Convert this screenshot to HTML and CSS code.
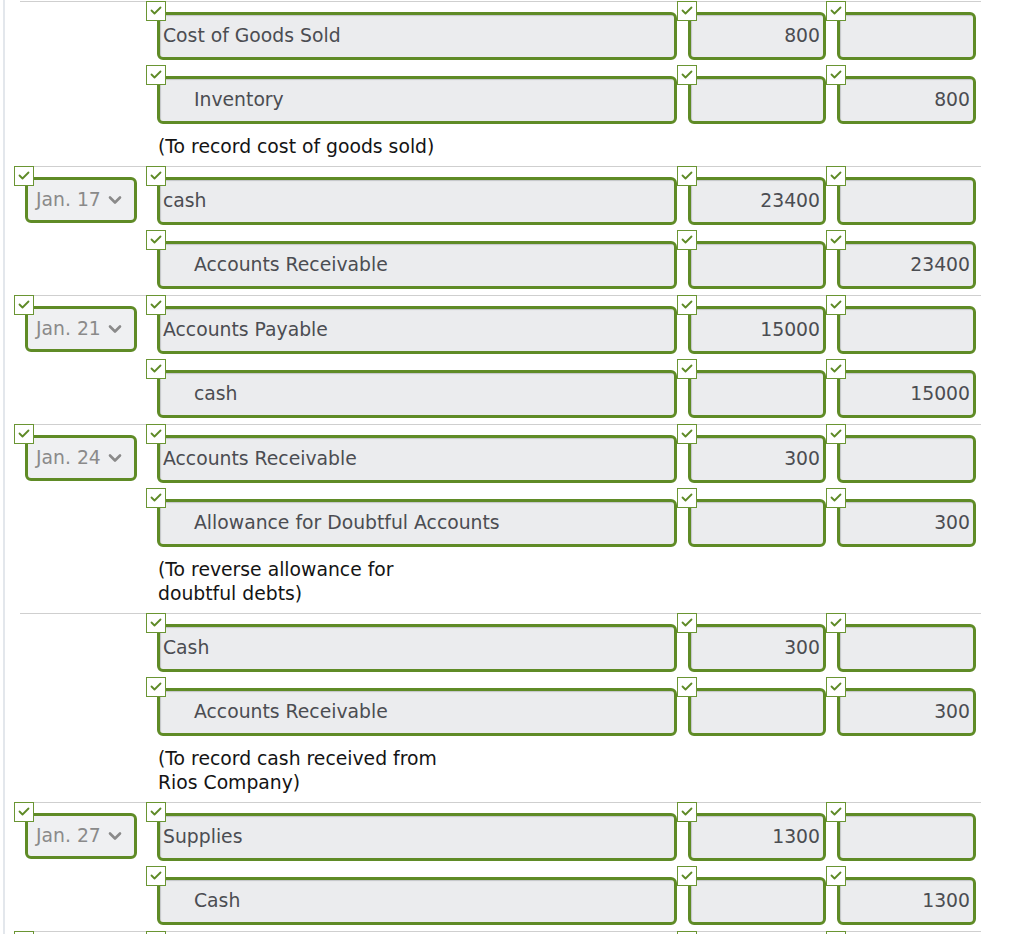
FILE: index.html
```html
<!DOCTYPE html>
<html>
<head>
<meta charset="utf-8">
<link rel="stylesheet" href="styles.css">
</head>
<body>
<div class="page">

  <div class="entry">
    <div class="row">
      <div class="cell date"></div>
      <div class="cell acct"><span class="cb"><svg viewBox="0 0 18 18"><path d="M4.5 8.5 L7.5 11.5 L13.5 5.5"/></svg></span><div class="field">Cost of Goods Sold</div></div>
      <div class="cell amt"><span class="cb"><svg viewBox="0 0 18 18"><path d="M4.5 8.5 L7.5 11.5 L13.5 5.5"/></svg></span><div class="field num">800</div></div>
      <div class="cell amt cr"><span class="cb"><svg viewBox="0 0 18 18"><path d="M4.5 8.5 L7.5 11.5 L13.5 5.5"/></svg></span><div class="field num"></div></div>
    </div>
    <div class="row">
      <div class="cell date"></div>
      <div class="cell acct"><span class="cb"><svg viewBox="0 0 18 18"><path d="M4.5 8.5 L7.5 11.5 L13.5 5.5"/></svg></span><div class="field credit">Inventory</div></div>
      <div class="cell amt"><span class="cb"><svg viewBox="0 0 18 18"><path d="M4.5 8.5 L7.5 11.5 L13.5 5.5"/></svg></span><div class="field num"></div></div>
      <div class="cell amt cr"><span class="cb"><svg viewBox="0 0 18 18"><path d="M4.5 8.5 L7.5 11.5 L13.5 5.5"/></svg></span><div class="field num">800</div></div>
    </div>
    <div class="note">(To record cost of goods sold)</div>
  </div>

  <div class="entry">
    <div class="row">
      <div class="cell date"><span class="cb"><svg viewBox="0 0 18 18"><path d="M4.5 8.5 L7.5 11.5 L13.5 5.5"/></svg></span><div class="select">Jan. 17<svg class="chev" viewBox="0 0 14 10"><path d="M2 2.5 L7 7.5 L12 2.5"/></svg></div></div>
      <div class="cell acct"><span class="cb"><svg viewBox="0 0 18 18"><path d="M4.5 8.5 L7.5 11.5 L13.5 5.5"/></svg></span><div class="field">cash</div></div>
      <div class="cell amt"><span class="cb"><svg viewBox="0 0 18 18"><path d="M4.5 8.5 L7.5 11.5 L13.5 5.5"/></svg></span><div class="field num">23400</div></div>
      <div class="cell amt cr"><span class="cb"><svg viewBox="0 0 18 18"><path d="M4.5 8.5 L7.5 11.5 L13.5 5.5"/></svg></span><div class="field num"></div></div>
    </div>
    <div class="row">
      <div class="cell date"></div>
      <div class="cell acct"><span class="cb"><svg viewBox="0 0 18 18"><path d="M4.5 8.5 L7.5 11.5 L13.5 5.5"/></svg></span><div class="field credit">Accounts Receivable</div></div>
      <div class="cell amt"><span class="cb"><svg viewBox="0 0 18 18"><path d="M4.5 8.5 L7.5 11.5 L13.5 5.5"/></svg></span><div class="field num"></div></div>
      <div class="cell amt cr"><span class="cb"><svg viewBox="0 0 18 18"><path d="M4.5 8.5 L7.5 11.5 L13.5 5.5"/></svg></span><div class="field num">23400</div></div>
    </div>
  </div>

  <div class="entry">
    <div class="row">
      <div class="cell date"><span class="cb"><svg viewBox="0 0 18 18"><path d="M4.5 8.5 L7.5 11.5 L13.5 5.5"/></svg></span><div class="select">Jan. 21<svg class="chev" viewBox="0 0 14 10"><path d="M2 2.5 L7 7.5 L12 2.5"/></svg></div></div>
      <div class="cell acct"><span class="cb"><svg viewBox="0 0 18 18"><path d="M4.5 8.5 L7.5 11.5 L13.5 5.5"/></svg></span><div class="field">Accounts Payable</div></div>
      <div class="cell amt"><span class="cb"><svg viewBox="0 0 18 18"><path d="M4.5 8.5 L7.5 11.5 L13.5 5.5"/></svg></span><div class="field num">15000</div></div>
      <div class="cell amt cr"><span class="cb"><svg viewBox="0 0 18 18"><path d="M4.5 8.5 L7.5 11.5 L13.5 5.5"/></svg></span><div class="field num"></div></div>
    </div>
    <div class="row">
      <div class="cell date"></div>
      <div class="cell acct"><span class="cb"><svg viewBox="0 0 18 18"><path d="M4.5 8.5 L7.5 11.5 L13.5 5.5"/></svg></span><div class="field credit">cash</div></div>
      <div class="cell amt"><span class="cb"><svg viewBox="0 0 18 18"><path d="M4.5 8.5 L7.5 11.5 L13.5 5.5"/></svg></span><div class="field num"></div></div>
      <div class="cell amt cr"><span class="cb"><svg viewBox="0 0 18 18"><path d="M4.5 8.5 L7.5 11.5 L13.5 5.5"/></svg></span><div class="field num">15000</div></div>
    </div>
  </div>

  <div class="entry">
    <div class="row">
      <div class="cell date"><span class="cb"><svg viewBox="0 0 18 18"><path d="M4.5 8.5 L7.5 11.5 L13.5 5.5"/></svg></span><div class="select">Jan. 24<svg class="chev" viewBox="0 0 14 10"><path d="M2 2.5 L7 7.5 L12 2.5"/></svg></div></div>
      <div class="cell acct"><span class="cb"><svg viewBox="0 0 18 18"><path d="M4.5 8.5 L7.5 11.5 L13.5 5.5"/></svg></span><div class="field">Accounts Receivable</div></div>
      <div class="cell amt"><span class="cb"><svg viewBox="0 0 18 18"><path d="M4.5 8.5 L7.5 11.5 L13.5 5.5"/></svg></span><div class="field num">300</div></div>
      <div class="cell amt cr"><span class="cb"><svg viewBox="0 0 18 18"><path d="M4.5 8.5 L7.5 11.5 L13.5 5.5"/></svg></span><div class="field num"></div></div>
    </div>
    <div class="row">
      <div class="cell date"></div>
      <div class="cell acct"><span class="cb"><svg viewBox="0 0 18 18"><path d="M4.5 8.5 L7.5 11.5 L13.5 5.5"/></svg></span><div class="field credit">Allowance for Doubtful Accounts</div></div>
      <div class="cell amt"><span class="cb"><svg viewBox="0 0 18 18"><path d="M4.5 8.5 L7.5 11.5 L13.5 5.5"/></svg></span><div class="field num"></div></div>
      <div class="cell amt cr"><span class="cb"><svg viewBox="0 0 18 18"><path d="M4.5 8.5 L7.5 11.5 L13.5 5.5"/></svg></span><div class="field num">300</div></div>
    </div>
    <div class="note">(To reverse allowance for doubtful debts)</div>
  </div>

  <div class="entry">
    <div class="row">
      <div class="cell date"></div>
      <div class="cell acct"><span class="cb"><svg viewBox="0 0 18 18"><path d="M4.5 8.5 L7.5 11.5 L13.5 5.5"/></svg></span><div class="field">Cash</div></div>
      <div class="cell amt"><span class="cb"><svg viewBox="0 0 18 18"><path d="M4.5 8.5 L7.5 11.5 L13.5 5.5"/></svg></span><div class="field num">300</div></div>
      <div class="cell amt cr"><span class="cb"><svg viewBox="0 0 18 18"><path d="M4.5 8.5 L7.5 11.5 L13.5 5.5"/></svg></span><div class="field num"></div></div>
    </div>
    <div class="row">
      <div class="cell date"></div>
      <div class="cell acct"><span class="cb"><svg viewBox="0 0 18 18"><path d="M4.5 8.5 L7.5 11.5 L13.5 5.5"/></svg></span><div class="field credit">Accounts Receivable</div></div>
      <div class="cell amt"><span class="cb"><svg viewBox="0 0 18 18"><path d="M4.5 8.5 L7.5 11.5 L13.5 5.5"/></svg></span><div class="field num"></div></div>
      <div class="cell amt cr"><span class="cb"><svg viewBox="0 0 18 18"><path d="M4.5 8.5 L7.5 11.5 L13.5 5.5"/></svg></span><div class="field num">300</div></div>
    </div>
    <div class="note">(To record cash received from Rios Company)</div>
  </div>

  <div class="entry">
    <div class="row">
      <div class="cell date"><span class="cb"><svg viewBox="0 0 18 18"><path d="M4.5 8.5 L7.5 11.5 L13.5 5.5"/></svg></span><div class="select">Jan. 27<svg class="chev" viewBox="0 0 14 10"><path d="M2 2.5 L7 7.5 L12 2.5"/></svg></div></div>
      <div class="cell acct"><span class="cb"><svg viewBox="0 0 18 18"><path d="M4.5 8.5 L7.5 11.5 L13.5 5.5"/></svg></span><div class="field">Supplies</div></div>
      <div class="cell amt"><span class="cb"><svg viewBox="0 0 18 18"><path d="M4.5 8.5 L7.5 11.5 L13.5 5.5"/></svg></span><div class="field num">1300</div></div>
      <div class="cell amt cr"><span class="cb"><svg viewBox="0 0 18 18"><path d="M4.5 8.5 L7.5 11.5 L13.5 5.5"/></svg></span><div class="field num"></div></div>
    </div>
    <div class="row">
      <div class="cell date"></div>
      <div class="cell acct"><span class="cb"><svg viewBox="0 0 18 18"><path d="M4.5 8.5 L7.5 11.5 L13.5 5.5"/></svg></span><div class="field credit">Cash</div></div>
      <div class="cell amt"><span class="cb"><svg viewBox="0 0 18 18"><path d="M4.5 8.5 L7.5 11.5 L13.5 5.5"/></svg></span><div class="field num"></div></div>
      <div class="cell amt cr"><span class="cb"><svg viewBox="0 0 18 18"><path d="M4.5 8.5 L7.5 11.5 L13.5 5.5"/></svg></span><div class="field num">1300</div></div>
    </div>
  </div>

  <div class="entry">
    <div class="row">
      <div class="cell date"><span class="cb"><svg viewBox="0 0 18 18"><path d="M4.5 8.5 L7.5 11.5 L13.5 5.5"/></svg></span><div class="select"></div></div>
      <div class="cell acct"><span class="cb"><svg viewBox="0 0 18 18"><path d="M4.5 8.5 L7.5 11.5 L13.5 5.5"/></svg></span><div class="field"></div></div>
      <div class="cell amt"><span class="cb"><svg viewBox="0 0 18 18"><path d="M4.5 8.5 L7.5 11.5 L13.5 5.5"/></svg></span><div class="field num"></div></div>
      <div class="cell amt cr"><span class="cb"><svg viewBox="0 0 18 18"><path d="M4.5 8.5 L7.5 11.5 L13.5 5.5"/></svg></span><div class="field num"></div></div>
    </div>
  </div>

</div>
</body>
</html>
```

FILE: styles.css
```css
html, body {
  margin: 0;
  padding: 0;
  background: #ffffff;
}

body {
  font-family: "DejaVu Sans", Verdana, sans-serif;
  font-size: 18.8px;
  color: #4a4a4a;
}

.page {
  position: relative;
  min-height: 934px;
  padding-top: 1px;
  border-left: 2px solid #e3e7ec;
  margin-left: 3px;
  box-sizing: border-box;
}

.entry {
  margin-left: 15px;
  width: 961px;
  border-top: 1px solid #cfcfcf;
  padding-bottom: 6px;
}

.row {
  display: flex;
  margin-left: -6px;
  margin-top: 5px;
  height: 59px;
}

.row:first-child {
  margin-top: -1px;
}

.cell {
  position: relative;
  padding: 11px 0 0 11px;
  box-sizing: border-box;
  height: 59px;
}

.cell.date { width: 132px; }
.cell.acct { width: 531px; }
.cell.amt { width: 149px; }
.cell.amt.cr { width: 150px; }

.cb {
  position: absolute;
  left: 0;
  top: 0;
  width: 20px;
  height: 20px;
  box-sizing: border-box;
  border: 1px solid #6a9533;
  background: #ffffff;
  z-index: 2;
}

.cb svg {
  display: block;
  width: 18px;
  height: 18px;
}

.cb path {
  fill: none;
  stroke: #5e8a26;
  stroke-width: 1.8;
  stroke-linecap: round;
  stroke-linejoin: round;
}

.field {
  height: 48px;
  box-sizing: border-box;
  border: 3px solid #5f8b26;
  border-radius: 6px;
  background: #ebecee;
  box-shadow: inset 2px 2px 1px -1px #c4c6c8;
  padding: 0 3px 2px 3px;
  display: flex;
  align-items: center;
  white-space: nowrap;
  overflow: hidden;
  color: #4b4d52;
}

.cell.acct .field { width: 520px; }
.cell.amt .field { width: 138px; }
.cell.amt.cr .field { width: 139px; }

.field.credit {
  padding-left: 34px;
}

.field.num {
  justify-content: flex-end;
}

.select {
  width: 112px;
  height: 46px;
  box-sizing: border-box;
  border: 3px solid #5f8b26;
  border-radius: 6px;
  background: #eff0f2;
  display: flex;
  align-items: center;
  padding: 0 0 1px 8px;
  color: #8a8a8a;
  white-space: nowrap;
}

.chev {
  width: 14px;
  height: 10px;
  margin-left: 7px;
}

.chev path {
  fill: none;
  stroke: #8a8a8a;
  stroke-width: 2.6;
  stroke-linecap: round;
  stroke-linejoin: round;
}

.note {
  margin: 11px 0 1px 138px;
  width: 300px;
  line-height: 24px;
  color: #141414;
}
```
